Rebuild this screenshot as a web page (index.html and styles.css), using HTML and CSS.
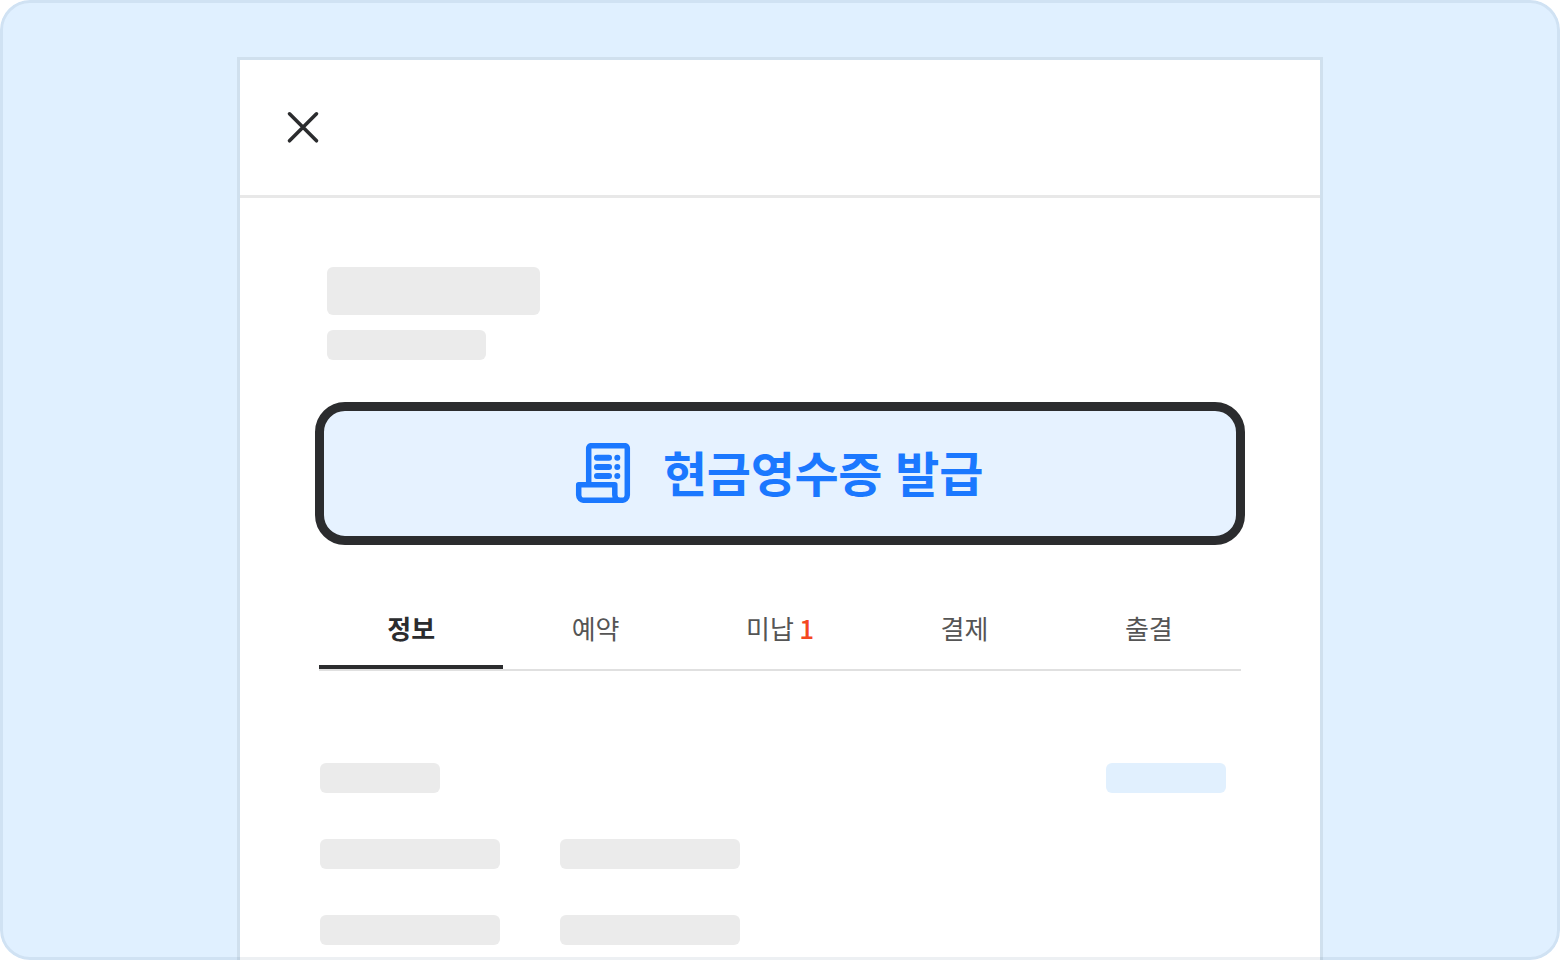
FILE: index.html
```html
<!DOCTYPE html>
<html lang="ko">
<head>
    <meta charset="UTF-8">
    <title>현금영수증 발급</title>
    <link rel="stylesheet" href="styles.css">
</head>
<body>
<div class="frame">
    <div class="panel">
        <div class="panel-head">
            <svg class="close" width="34" height="34" viewBox="0 0 34 34">
                <path d="M3.500 2.800L30.500 29.800M30.500 2.800L3.500 29.800" fill="none" stroke="#2b2c2e" stroke-width="3.600" stroke-linecap="round"/>
            </svg>
        </div>
        <div class="title-group">
            <div class="sk sk-title"></div>
            <div class="sk sk-sub"></div>
        </div>
        <div class="receipt-btn">
            <svg class="receipt-icon" width="56" height="60" viewBox="0 0 56 60">
                <path d="M13.700 41.700V5A2.300 2.300 0 0 1 16 2.700H50A2.300 2.300 0 0 1 52.300 5V52A5.300 5.300 0 0 1 47 57.300H9A5.300 5.300 0 0 1 3.700 52V41.700H39.800V52A5.300 5.300 0 0 0 45 57.300H47" fill="none" stroke="#1b78ff" stroke-width="5.500" stroke-linejoin="round" stroke-linecap="round"/>
                <path d="M22 14.800H34M22 24H34M22 33H34" fill="none" stroke="#1b78ff" stroke-width="6" stroke-linecap="round"/>
                <circle cx="42.300" cy="14.800" r="3" fill="#1b78ff"/>
                <circle cx="42.300" cy="24" r="3" fill="#1b78ff"/>
                <circle cx="42.300" cy="33" r="3" fill="#1b78ff"/>
            </svg>
            <span class="receipt-text">현금영수증 발급</span>
        </div>
        <div class="tabs">
            <span class="tab on">정보</span>
            <span class="tab">예약</span>
            <span class="tab">미납 <b class="count">1</b></span>
            <span class="tab">결제</span>
            <span class="tab">출결</span>
        </div>
        <div class="rows">
            <div class="row between">
                <div class="sk sk-label"></div>
                <div class="sk sk-label blue"></div>
            </div>
            <div class="row">
                <div class="sk sk-field"></div>
                <div class="sk sk-field"></div>
            </div>
            <div class="row">
                <div class="sk sk-field"></div>
                <div class="sk sk-field"></div>
            </div>
        </div>
    </div>
</div>
</body>
</html>
```

FILE: styles.css
```css
*{
    padding: 0;
    margin: 0;
    box-sizing: border-box;
}
html,body{
    background: #ffffff;
}
.frame{
    position: relative;
    width: 1560px;
    height: 960px;
    overflow: hidden;
    border-radius: 30px;
    background: #e0f0ff;
    padding: 57px 237px 0 237px;
    font-family: "Noto Sans CJK KR", "Noto Sans", sans-serif;
}
.frame::after{
    content: "";
    position: absolute;
    top: 0;
    left: 0;
    right: 0;
    bottom: 0;
    border: 3px solid rgba(0,40,80,.07);
    border-radius: 30px;
}
.panel{
    height: 903px;
    background: #ffffff;
    border: 3px solid #d0e0ee;
    border-bottom: none;
}
.panel-head{
    height: 138px;
    border-bottom: 3px solid #e8e8e8;
    display: flex;
    align-items: center;
    padding: 0 0 0 46px;
}
.sk{
    background: #ebebeb;
    border-radius: 6px;
}
.title-group{
    padding: 69px 0 0 87px;
}
.sk-title{
    width: 213px;
    height: 48px;
}
.sk-sub{
    width: 159px;
    height: 30px;
    margin-top: 15px;
}
.receipt-btn{
    width: 930px;
    height: 143px;
    margin: 42px 0 0 75px;
    padding-right: 2px;
    background: #e6f2ff;
    border: 9px solid #2b2c2e;
    border-radius: 30px;
    display: flex;
    align-items: center;
    justify-content: center;
    gap: 32px;
}
.receipt-icon{
    margin-bottom: 1px;
}
.receipt-text{
    font-size: 48px;
    font-weight: 700;
    color: #1b78ff;
    line-height: 60px;
    letter-spacing: -.3px;
    padding-bottom: 6px;
}
.tabs{
    display: flex;
    width: 922px;
    height: 126px;
    margin-left: 79px;
    align-items: flex-end;
}
.tab{
    flex: 1;
    height: 66px;
    text-align: center;
    font-size: 26px;
    line-height: 46px;
    color: #555555;
    border-bottom: 2px solid #e0e0e0;
}
.tab.on{
    font-weight: 700;
    color: #2b2c2e;
    border-bottom: 4px solid #2b2c2e;
    height: 64px;
    margin-bottom: 2px;
    box-shadow: 0 2px 0 #e0e0e0;
}
.count{
    color: #f4481f;
    font-weight: 500;
    margin-left: -2px;
}
.rows{
    padding: 92px 94px 0 80px;
    display: flex;
    flex-direction: column;
    gap: 46px;
}
.row{
    display: flex;
    gap: 60px;
}
.row.between{
    justify-content: space-between;
}
.sk-label{
    width: 120px;
    height: 30px;
}
.sk-label.blue{
    background: #e1f0fe;
}
.sk-field{
    width: 180px;
    height: 30px;
}
```
